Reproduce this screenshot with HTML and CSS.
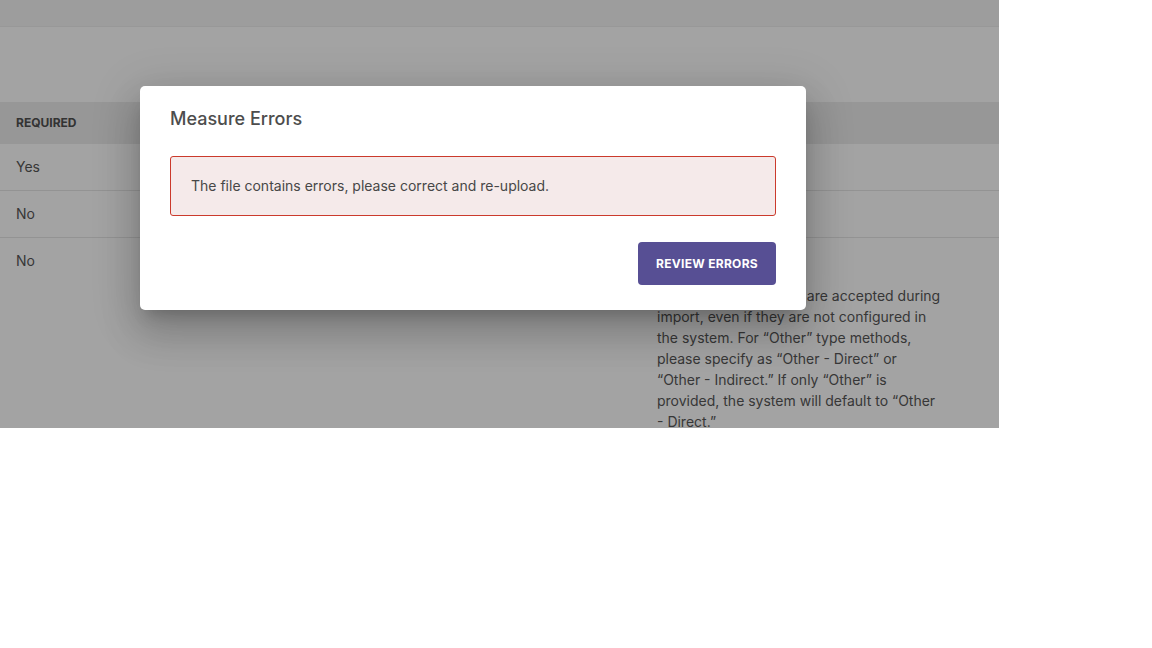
FILE: index.html
```html
<!DOCTYPE html>
<html lang="en">
<head>
<meta charset="utf-8">
<title>Measure Errors</title>
<link rel="stylesheet" href="styles.css">
</head>
<body>
<div class="stage">
  <div class="page">
    <div class="topbar"></div>
    <div class="band"></div>
    <div class="table">
      <div class="row head">
        <div class="cell">Required</div>
        <div class="cell"></div>
        <div class="cell"></div>
      </div>
      <div class="row">
        <div class="cell">Yes</div>
        <div class="cell"></div>
        <div class="cell"></div>
      </div>
      <div class="row">
        <div class="cell">No</div>
        <div class="cell"></div>
        <div class="cell"></div>
      </div>
      <div class="row tall">
        <div class="cell">No</div>
        <div class="cell"></div>
        <div class="cell desc">
          <p>All collection methods are accepted during<br>import, even if they are not configured in<br>the system. For “Other” type methods,<br>please specify as “Other - Direct” or<br>“Other - Indirect.” If only “Other” is<br>provided, the system will default to “Other<br>- Direct.”</p>
        </div>
      </div>
    </div>
  </div>
  <div class="overlay"></div>
  <div class="modal" role="dialog">
    <h2 class="modal-title">Measure Errors</h2>
    <div class="alert">The file contains errors, please correct and re-upload.</div>
    <div class="actions">
      <button class="btn">Review Errors</button>
    </div>
  </div>
</div>
</body>
</html>
```

FILE: styles.css
```css
* { box-sizing: border-box; }
html, body { margin: 0; padding: 0; background: #ffffff; }
body { font-family: Inter, "Noto Sans", "Liberation Sans", sans-serif; }

.stage {
  position: relative;
  width: 999px;
  height: 428px;
  overflow: hidden;
  background: #ffffff;
}

.page { display: flex; flex-direction: column; }
.topbar { height: 27px; background: #f6f6f6; border-bottom: 1px solid #eeeeee; }
.band { height: 75px; background: #ffffff; }

.table { display: flex; flex-direction: column; }
.row {
  display: grid;
  grid-template-columns: 220px 421px 1fr;
  border-bottom: 1px solid #e6e6e6;
  height: 47px;
  align-items: center;
}
.row.head { height: 42px; background: #ececec; border-bottom: none; }
.row.tall { height: auto; align-items: start; border-bottom: none; }
.cell {
  padding: 0 16px;
  font-size: 14px;
  line-height: 20px;
  color: #575757;
}
.row.head .cell {
  font-size: 12px;
  font-weight: 700;
  text-transform: uppercase;
  color: #505050;
}
.row.tall .cell { padding-top: 13px; }
.desc p { margin: 34px 0 0; line-height: 21px; font-size: 14px; color: #575757; }

.overlay {
  position: absolute;
  inset: 0;
  background: rgba(0, 0, 0, 0.36);
}

.modal {
  position: absolute;
  left: 140px;
  top: 86px;
  width: 666px;
  background: #ffffff;
  border-radius: 5px;
  padding: 20px 30px 25px;
  box-shadow: 0 11px 15px -7px rgba(0,0,0,.2), 0 24px 38px 3px rgba(0,0,0,.14), 0 9px 46px 8px rgba(0,0,0,.12);
}
.modal-title {
  margin: 0;
  font-size: 18px;
  line-height: 26px;
  font-weight: 500;
  color: #4d4d4d;
}
.alert {
  margin-top: 24px;
  border: 1px solid #cb3a2c;
  background: #f5eaea;
  border-radius: 3px;
  padding: 18px 20px;
  font-size: 14px;
  line-height: 22px;
  color: #474747;
}
.actions { display: flex; justify-content: flex-end; margin-top: 26px; }
.btn {
  height: 43px;
  width: 138px;
  border: none;
  border-radius: 4px;
  background: #574f94;
  color: #ffffff;
  font-family: Inter, "Noto Sans", "Liberation Sans", sans-serif;
  font-size: 12px;
  font-weight: 700;
  text-transform: uppercase;
  letter-spacing: 0.3px;
  padding: 0;
}
```
